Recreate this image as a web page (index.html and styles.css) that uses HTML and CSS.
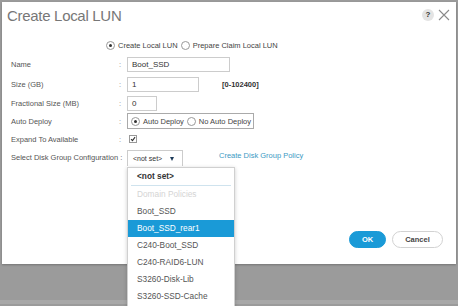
FILE: index.html
```html
<!DOCTYPE html>
<html lang="en">

<head>
    <meta charset="UTF-8">
    <title>Create Local LUN</title>
    <link rel="stylesheet" href="styles.css">
</head>

<body>
    <div class="dialog">
        <div class="title-bar">
            <h2 class="title">Create Local LUN</h2>
            <div class="title-tools">
                <span class="help">?</span>
                <svg class="close" width="12" height="12" viewBox="0 0 12 12">
                    <path d="M1 1 L11 11 M11 1 L1 11" stroke="#8a8a8a" stroke-width="1.1" fill="none"/>
                </svg>
            </div>
        </div>

        <div class="mode-row">
            <span class="radio checked"></span><span class="radio-label">Create Local LUN</span>
            <span class="radio"></span><span class="radio-label">Prepare Claim Local LUN</span>
        </div>

        <div class="form">
            <div class="row row-20">
                <span class="label">Name</span>
                <span class="colon">:</span>
                <div class="field"><span class="input w-name">Boot_SSD</span></div>
            </div>
            <div class="row row-20">
                <span class="label">Size (GB)</span>
                <span class="colon">:</span>
                <div class="field"><span class="input w-size">1</span><span class="range">[0-102400]</span></div>
            </div>
            <div class="row">
                <span class="label">Fractional Size (MB)</span>
                <span class="colon">:</span>
                <div class="field"><span class="input w-frac">0</span></div>
            </div>
            <div class="row">
                <span class="label">Auto Deploy</span>
                <span class="colon">:</span>
                <div class="field">
                    <div class="radio-box">
                        <span class="radio checked"></span><span class="radio-label">Auto Deploy</span>
                        <span class="radio"></span><span class="radio-label">No Auto Deploy</span>
                    </div>
                </div>
            </div>
            <div class="row">
                <span class="label">Expand To Available</span>
                <span class="colon">:</span>
                <div class="field">
                    <span class="checkbox">
                        <svg width="7" height="7" viewBox="0 0 7 7"><path d="M1.2 3.6 L2.9 5.3 L5.9 1.4" stroke="#333" stroke-width="1.3" fill="none"/></svg>
                    </span>
                </div>
            </div>
            <div class="row">
                <span class="label">Select Disk Group Configuration :</span>
                <span class="colon"></span>
                <div class="field">
                    <span class="select">&lt;not set&gt;<span class="arrow"></span></span>
                    <a class="link">Create Disk Group Policy</a>
                </div>
            </div>
        </div>

        <div class="actions">
            <button class="btn btn-ok">OK</button>
            <button class="btn btn-cancel">Cancel</button>
        </div>

        <ul class="menu">
            <li class="menu-item first">&lt;not set&gt;</li>
            <li class="menu-item group">Domain Policies</li>
            <li class="menu-item">Boot_SSD</li>
            <li class="menu-item active">Boot_SSD_rear1</li>
            <li class="menu-item">C240-Boot_SSD</li>
            <li class="menu-item">C240-RAID6-LUN</li>
            <li class="menu-item">S3260-Disk-Lib</li>
            <li class="menu-item">S3260-SSD-Cache</li>
        </ul>
    </div>
    <div class="footer"></div>
</body>

</html>
```

FILE: styles.css
```css
body {
    margin: 0;
    height: 306px;
    overflow: hidden;
    background-color: #9b9b9b;
    font-family: 'Liberation Sans', Arial, sans-serif;
    color: #555;
}

.dialog {
    position: relative;
    width: 454px;
    height: 262px;
    margin: 2px 0 0 2px;
    background-color: #fff;
    box-shadow: 0 1px 2px rgba(0, 0, 0, 0.25);
}

.title-bar {
    display: flex;
    justify-content: space-between;
    align-items: center;
    height: 26px;
    padding: 0 6px 0 5px;
}

.title {
    margin: 0;
    font-size: 15px;
    font-weight: normal;
    color: #777;
    letter-spacing: -0.3px;
}

.title-tools {
    display: flex;
    align-items: center;
    gap: 4px;
}

.help {
    width: 12px;
    height: 12px;
    border-radius: 50%;
    background-color: #e4e4e4;
    color: #333;
    font-size: 8px;
    font-weight: bold;
    line-height: 12px;
    text-align: center;
}

.mode-row {
    display: flex;
    align-items: center;
    height: 18px;
    margin-top: 8px;
    padding-left: 104px;
    font-size: 7.5px;
    color: #444;
}

.radio {
    display: inline-block;
    position: relative;
    flex-shrink: 0;
    width: 7px;
    height: 7px;
    border: 1px solid #999;
    border-radius: 50%;
    margin-right: 3px;
    background: #fff;
}

.radio.checked::after {
    content: "";
    position: absolute;
    left: 2px;
    top: 2px;
    width: 3px;
    height: 3px;
    border-radius: 50%;
    background: #333;
}

.radio-label {
    margin-right: 3px;
    white-space: nowrap;
}

.form {
    font-size: 7.5px;
}

.row {
    display: flex;
    align-items: center;
    height: 18px;
}

.row-20 {
    height: 20px;
}

.label {
    width: 108px;
    padding-left: 9px;
    color: #555;
    white-space: nowrap;
}

.colon {
    width: 8px;
    color: #888;
}

.field {
    display: flex;
    align-items: center;
}

.input {
    box-sizing: border-box;
    height: 15px;
    line-height: 13px;
    padding-left: 4px;
    border: 1px solid #ccc;
    font-size: 8px;
    color: #333;
}

.w-name { width: 103px; }
.w-size { width: 72px; }
.w-frac { width: 30px; }

.range {
    margin-left: 23px;
    font-weight: bold;
    font-size: 7.5px;
    color: #333;
}

.radio-box {
    display: flex;
    align-items: center;
    box-sizing: border-box;
    width: 127px;
    height: 16px;
    padding-left: 3px;
    border: 1px solid #aaa;
    color: #444;
}

.checkbox {
    display: inline-flex;
    box-sizing: border-box;
    width: 8px;
    height: 8px;
    margin-left: 2px;
    border: 1px solid #999;
    align-items: center;
    justify-content: center;
}

.checkbox svg {
    width: 6px;
    height: 6px;
}

.select {
    display: flex;
    align-items: center;
    box-sizing: border-box;
    width: 56px;
    height: 16px;
    margin-top: 2px;
    padding-left: 5px;
    border: 1px solid #ccc;
    border-bottom: none;
    color: #333;
    font-size: 7px;
}

.arrow {
    margin-left: 8px;
    width: 0;
    height: 0;
    border-left: 2.5px solid transparent;
    border-right: 2.5px solid transparent;
    border-top: 4px solid #1d3b5a;
}

.link {
    margin-left: 36px;
    margin-top: -4px;
    color: #3c9ac4;
    font-size: 7.5px;
}

.actions {
    position: absolute;
    right: 13px;
    top: 229px;
    display: flex;
    gap: 6px;
}

.btn {
    height: 17px;
    border-radius: 9px;
    font-family: inherit;
    font-size: 7.5px;
    font-weight: bold;
    padding: 0;
}

.btn-ok {
    width: 37px;
    background-color: #1a9ad7;
    border: 1px solid #1a9ad7;
    color: #fff;
}

.btn-cancel {
    width: 51px;
    background-color: #fff;
    border: 1px solid #d2d2d2;
    color: #444;
}

.menu {
    position: absolute;
    left: 125px;
    top: 165px;
    width: 106px;
    height: 150px;
    margin: 0;
    padding: 0;
    list-style: none;
    background-color: #fff;
    border: 1px solid #d0d0d0;
    box-shadow: 0 1px 4px rgba(0, 0, 0, 0.2);
    font-size: 8.3px;
    color: #555;
}

.menu-item {
    height: 17px;
    line-height: 17px;
    padding-left: 9px;
}

.menu-item.first {
    font-weight: bold;
    color: #333;
    margin: 0 3px;
    padding-left: 6px;
    border-bottom: 1px solid #cfe3ee;
}

.menu-item.group {
    color: #d4d4d4;
}

.menu-item.active {
    background-color: #1a9ad7;
    color: #fff;
}

.footer {
    height: 4px;
    margin-top: 36px;
    background-color: #a8a8a8;
}
```
